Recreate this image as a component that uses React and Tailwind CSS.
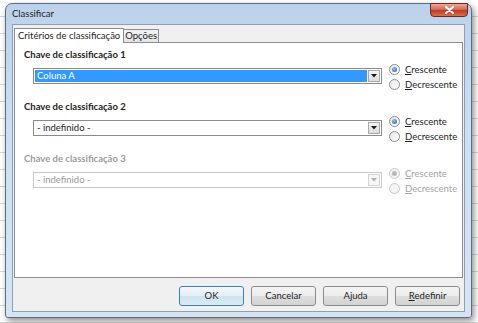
function Radio({ checked, disabled, label }) {
  const first = label[0];
  const rest = label.slice(1);
  return (
    <div className={`flex h-[15px] items-center gap-[5px] ${disabled ? "text-[#a3a3a3]" : "text-[#1e1e1e]"}`}>
      <span
        className={`flex h-[11px] w-[11px] items-center justify-center rounded-full border ${
          disabled ? "border-[#c8c8c8] bg-[#f4f4f4]" : "border-[#8e8f8f] bg-[linear-gradient(135deg,#e6e6e6,#ffffff)]"
        }`}
      >
        {checked && (
          <span
            className={`h-[5px] w-[5px] rounded-full ${
              disabled ? "bg-[#b8b8b8]" : "bg-[radial-gradient(circle_at_40%_35%,#8fc3f0,#1d5a96)]"
            }`}
          />
        )}
      </span>
      <span className="text-[9.5px] leading-[15px]">
        <span className="underline">{first}</span>
        {rest}
      </span>
    </div>
  );
}

function Select({ value, selected, disabled }) {
  return (
    <div
      className={`flex h-[16px] w-[349px] items-stretch border bg-white p-[1px] ${
        disabled ? "border-[#c9c9c9]" : "border-[#8a8a8a]"
      }`}
    >
      <div
        className={`flex flex-1 items-center pl-[2px] text-[9.5px] leading-none ${
          selected ? "bg-[#3399ff] text-white" : disabled ? "text-[#9a9a9a]" : "text-[#1e1e1e]"
        }`}
      >
        {value}
      </div>
      <div
        className={`ml-[1px] flex w-[12px] items-center justify-center border ${
          disabled ? "border-[#d4d4d4] bg-[#f7f7f7]" : "border-[#a8a8a8] bg-[linear-gradient(#f4f4f4,#dcdcdc)]"
        }`}
      >
        <svg width="6" height="4" viewBox="0 0 6 4">
          <path d="M0 0 H6 L3 3.5 Z" fill={disabled ? "#b0b0b0" : "#1a1a1a"} />
        </svg>
      </div>
    </div>
  );
}

function Group({ n, value, selected, disabled }) {
  return (
    <div className="flex h-[52px] flex-col">
      <div
        className={`pl-[9px] text-[9.5px] font-bold leading-[14px] ${disabled ? "text-[#9c9c9c]" : "text-[#1e1e1e]"}`}
      >
        Chave de classificação {n}
      </div>
      <div className="flex">
        <div className="ml-[18px] mt-[6px]">
          <Select value={value} selected={selected} disabled={disabled} />
        </div>
        <div className="ml-[7px] flex flex-col">
          <Radio checked disabled={disabled} label="Crescente" />
          <Radio disabled={disabled} label="Decrescente" />
        </div>
      </div>
    </div>
  );
}

function Button({ children, primary }) {
  return (
    <button
      className={`flex h-[20px] w-[65px] items-center justify-center rounded-[3px] border text-[9.5px] text-[#1e1e1e] ${
        primary
          ? "border-[#3c7fb1] bg-[linear-gradient(#f2f7fb_0%,#e3eef7_50%,#cfe2f0_51%,#dbeaf4_100%)]"
          : "border-[#8a8a8a] bg-[linear-gradient(#f4f4f4_0%,#ececec_50%,#dedede_51%,#d3d3d3_100%)]"
      }`}
    >
      {children}
    </button>
  );
}

export default function App() {
  return (
    <div className="relative h-[323px] w-[478px] overflow-hidden bg-white bg-[repeating-linear-gradient(to_bottom,transparent_0px,transparent_16px,#d6d6d6_16px,#d6d6d6_17px)] font-['Lato',sans-serif]">
      <div className="absolute left-[5px] top-[3px] flex h-[315px] w-[467px] flex-col rounded-t-[7px] rounded-b-[3px] border border-[#5d6d80] bg-[linear-gradient(#bcd2ea,#cddff1_40%,#d6e4f2)] shadow-[2px_3px_6px_rgba(0,0,0,0.45)]">
        <div className="flex h-[20px] items-start pl-[6px]">
          <div className="mt-[3px] text-[9.5px] leading-[14px] text-[#1e1e1e]">Classificar</div>
          <div className="ml-auto mr-[3px] mt-[-1px] flex h-[14px] w-[38px] items-center justify-center rounded-b-[4px] border border-[#6b2a22] bg-[linear-gradient(#e9a99b,#d46a58_45%,#c23a26_55%,#d8704f)]">
            <svg width="9" height="8" viewBox="0 0 9 8">
              <path d="M1 1 L8 7 M8 1 L1 7" stroke="#ffffff" strokeWidth="2" strokeLinecap="round" />
            </svg>
          </div>
        </div>
        <div className="mx-[6px] mb-[5px] flex flex-1 flex-col border border-[#8aa0ba] bg-[#f0f0f0]">
          <div className="flex h-[17px] items-end pl-[1px]">
            <div className="relative z-10 -mb-px flex h-[15px] items-center border border-b-0 border-[#898c95] bg-white px-[3px] text-[9.5px] text-[#1e1e1e]">
              Critérios de classificação
            </div>
            <div className="flex h-[13px] items-center border border-b-0 border-l-0 border-[#898c95] bg-[linear-gradient(#f3f3f3,#e5e5e5)] px-[1px] text-[9.5px] text-[#1e1e1e]">
              Opções
            </div>
          </div>
          <div className="mx-[1px] flex h-[236px] flex-col border border-[#898c95] bg-white pt-[5px]">
            <Group n={1} value="Coluna A" selected />
            <Group n={2} value="- indefinido -" />
            <Group n={3} value="- indefinido -" disabled />
          </div>
          <div className="flex flex-1 items-center justify-end gap-[7px] pr-[4px] pt-[3px]">
            <Button primary>OK</Button>
            <Button>Cancelar</Button>
            <Button>
              A<span className="underline">j</span>uda
            </Button>
            <Button>
              <span className="underline">R</span>edefinir
            </Button>
          </div>
        </div>
      </div>
    </div>
  );
}
